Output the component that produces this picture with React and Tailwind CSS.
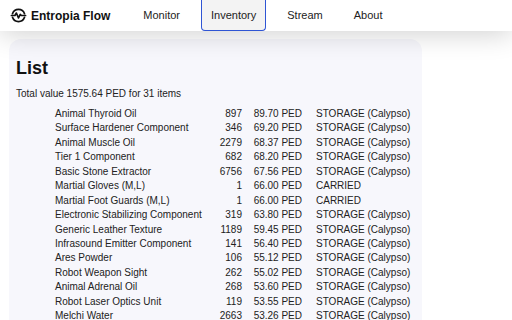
import React from 'react';

const items = [
  ['Animal Thyroid Oil', 897, '89.70 PED', 'STORAGE (Calypso)'],
  ['Surface Hardener Component', 346, '69.20 PED', 'STORAGE (Calypso)'],
  ['Animal Muscle Oil', 2279, '68.37 PED', 'STORAGE (Calypso)'],
  ['Tier 1 Component', 682, '68.20 PED', 'STORAGE (Calypso)'],
  ['Basic Stone Extractor', 6756, '67.56 PED', 'STORAGE (Calypso)'],
  ['Martial Gloves (M,L)', 1, '66.00 PED', 'CARRIED'],
  ['Martial Foot Guards (M,L)', 1, '66.00 PED', 'CARRIED'],
  ['Electronic Stabilizing Component', 319, '63.80 PED', 'STORAGE (Calypso)'],
  ['Generic Leather Texture', 1189, '59.45 PED', 'STORAGE (Calypso)'],
  ['Infrasound Emitter Component', 141, '56.40 PED', 'STORAGE (Calypso)'],
  ['Ares Powder', 106, '55.12 PED', 'STORAGE (Calypso)'],
  ['Robot Weapon Sight', 262, '55.02 PED', 'STORAGE (Calypso)'],
  ['Animal Adrenal Oil', 268, '53.60 PED', 'STORAGE (Calypso)'],
  ['Robot Laser Optics Unit', 119, '53.55 PED', 'STORAGE (Calypso)'],
  ['Melchi Water', 2663, '53.26 PED', 'STORAGE (Calypso)'],
];

function Logo() {
  return (
    <svg width="17" height="17" viewBox="0 0 24 24" fill="none" stroke="#111" strokeWidth="2.4" strokeLinecap="round" strokeLinejoin="round">
      <path d="M3.5 9.5A9 9 0 0 1 20.5 9.5" />
      <path d="M3.5 14.5A9 9 0 0 0 20.5 14.5" />
      <path d="M2 12h5l2-3.5 3 7 2.5-5 1.5 1.5h6" />
    </svg>
  );
}

export default function App() {
  return (
    <div className="w-[512px] h-[320px] overflow-hidden bg-white text-[#222] font-['Liberation_Sans',Arial,sans-serif]">
      <header className="relative z-10 h-[31px] bg-white flex items-center shadow-[0_2px_28px_rgba(0,0,0,0.2)]">
        <div className="flex items-center gap-[4px] pl-[10px]">
          <Logo />
          <span className="text-[12px] font-bold text-[#111]">Entropia Flow</span>
        </div>
        <nav className="flex h-full ml-[23px] gap-[11px] text-[11px]">
          <div className="flex items-center px-[10px]">Monitor</div>
          <div className="flex items-center px-[9px] h-full border border-t-0 border-[#2f55d4] rounded-b-[4px] bg-[#f3f3f3]">Inventory</div>
          <div className="flex items-center px-[10px]">Stream</div>
          <div className="flex items-center px-[10px]">About</div>
        </nav>
      </header>
      <main className="pt-[8px] pl-[9px]">
        <div className="w-[413px] h-[400px] bg-[#f7f7fc] rounded-[12px] pl-[7px] pt-[19px]">
          <h1 className="text-[18px] font-bold leading-[20px] text-[#111]">List</h1>
          <p className="mt-[10px] text-[10px] leading-[12px]">Total value 1575.64 PED for 31 items</p>
          <div className="mt-[7px] ml-[39px] text-[10px]">
            {items.map((it) => (
              <div key={it[0]} className="flex leading-[14.43px]">
                <span className="w-[150px]">{it[0]}</span>
                <span className="w-[37px] text-right">{it[1]}</span>
                <span className="w-[60px] text-right">{it[2]}</span>
                <span className="ml-[14px]">{it[3]}</span>
              </div>
            ))}
          </div>
        </div>
      </main>
    </div>
  );
}
